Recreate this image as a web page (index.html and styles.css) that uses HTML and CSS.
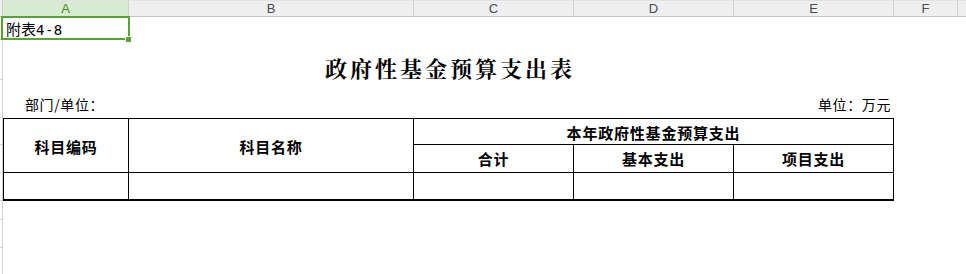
FILE: index.html
```html
<!DOCTYPE html>
<html lang="zh-CN">
<head>
<meta charset="utf-8">
<title>政府性基金预算支出表</title>
<link rel="stylesheet" href="styles.css">
</head>
<body>
<div class="sheet">
  <div class="ch corner"></div>
  <div class="ch ch-a">A</div>
  <div class="ch">B</div>
  <div class="ch">C</div>
  <div class="ch">D</div>
  <div class="ch">E</div>
  <div class="ch">F</div>
  <div class="ch ch-rest"></div>

  <div class="rh r1"></div>
  <div class="cell a1">附表<span class="num">4-8</span><span class="handle"></span></div>

  <div class="rh r2"></div>
  <div class="cell title">政府性基金预算支出表</div>

  <div class="rh r3"></div>
  <div class="cell unit"><span>部门/单位：</span><span class="unit-right">单位：万元</span></div>

  <div class="rh r4"></div>
  <div class="rh r5"></div>
  <div class="rh r6"></div>
  <div class="t th c-a span2 first-row first-col">科目编码</div>
  <div class="t th c-b span2 first-row">科目名称</div>
  <div class="t th c-cde first-row">本年政府性基金预算支出</div>
  <div class="t th c-c r-5">合计</div>
  <div class="t th c-d r-5">基本支出</div>
  <div class="t th c-e r-5">项目支出</div>
  <div class="t c-a r-6 first-col last-row"></div>
  <div class="t c-b r-6 last-row"></div>
  <div class="t c-c r-6 last-row"></div>
  <div class="t c-d r-6 last-row"></div>
  <div class="t c-e r-6 last-row"></div>

  <div class="rh r7"></div>
  <div class="rh r8"></div>
  <div class="rh r9"></div>
</div>
</body>
</html>
```

FILE: styles.css
```css
html, body {
  margin: 0;
  padding: 0;
  background: #ffffff;
}
body {
  width: 966px;
  height: 274px;
  overflow: hidden;
  font-family: "Noto Sans CJK SC", "Noto Sans", sans-serif;
  color: #000;
}
.sheet {
  display: grid;
  grid-template-columns: 3px 126px 285px 160px 160px 160px 64px 1fr;
  grid-template-rows: 17px 23px 40px 38px 27px 28px 28px 19px 28px 26px;
  height: 274px;
}
/* column header */
.ch {
  grid-row: 1;
  box-sizing: border-box;
  background: #efefef;
  border-top: 1px solid #e2e2e2;
  border-bottom: 1px solid #c6c6c6;
  border-right: 1px solid #d0d0d0;
  font-family: "Liberation Sans", Arial, sans-serif;
  font-size: 13px;
  line-height: 15px;
  color: #4a4a55;
  text-align: center;
}
.corner { border-right: 1px solid #d0d0d0; }
.ch-a {
  background: #d9ead2;
  color: #3f8f26;
}
.ch-rest { border-right: none; }

/* row header strip */
.rh {
  grid-column: 1;
  box-sizing: border-box;
  border-right: 1px solid #d0d0d0;
  border-bottom: 1px solid #d0d0d0;
}
.r1 { grid-row: 2; }
.r2 { grid-row: 3; }
.r3 { grid-row: 4; }
.r4 { grid-row: 5; }
.r5 { grid-row: 6; }
.r6 { grid-row: 7; }
.r7 { grid-row: 8; }
.r8 { grid-row: 9; }
.r9 { grid-row: 10; border-bottom: none; }

.cell { box-sizing: border-box; }
.a1 {
  grid-row: 2;
  grid-column: 2;
  position: relative;
  font-size: 15px;
  line-height: 23px;
  padding-left: 3px;
}
.num {
  font-family: "DejaVu Sans Mono", "Liberation Mono", monospace;
  font-size: 14px;
  letter-spacing: 0.5px;
}
.a1::after {
  content: "";
  position: absolute;
  left: -2px;
  top: -1px;
  right: -1px;
  bottom: 0;
  border: 2px solid #57a531;
  pointer-events: none;
}
.handle {
  position: absolute;
  right: -3px;
  bottom: -3px;
  width: 5px;
  height: 5px;
  background: #57a531;
  border: 1px solid #ffffff;
  z-index: 2;
}
.title {
  grid-row: 3;
  grid-column: 2 / 7;
  display: flex;
  justify-content: center;
  align-items: center;
  padding-top: 14px;
  font-family: "Noto Serif CJK SC", "Noto Sans CJK SC", serif;
  font-weight: 700;
  font-size: 22px;
  letter-spacing: 3px;
  padding-left: 3px;
}
.unit {
  grid-row: 4;
  grid-column: 2 / 7;
  display: flex;
  justify-content: space-between;
  align-items: center;
  padding: 9px 3px 0 22px;
  font-size: 14px;
  letter-spacing: 0.6px;
}

/* table */
.t {
  box-sizing: border-box;
  border-right: 1px solid #000;
  border-bottom: 1px solid #000;
  display: flex;
  justify-content: center;
  align-items: center;
}
.th {
  font-weight: 700;
  font-size: 15px;
  letter-spacing: 0.8px;
}
.first-row { border-top: 1px solid #000; }
.first-col { border-left: 1px solid #000; }
.last-row { border-bottom: 2px solid #000; }
.span2 { grid-row: 5 / 7; padding-top: 2px; }
.c-a { grid-column: 2; }
.c-b { grid-column: 3; }
.c-cde { grid-column: 4 / 7; grid-row: 5; padding-top: 2px; }
.c-c { grid-column: 4; }
.c-d { grid-column: 5; }
.c-e { grid-column: 6; }
.r-5 { grid-row: 6; }
.r-6 { grid-row: 7; }
```
